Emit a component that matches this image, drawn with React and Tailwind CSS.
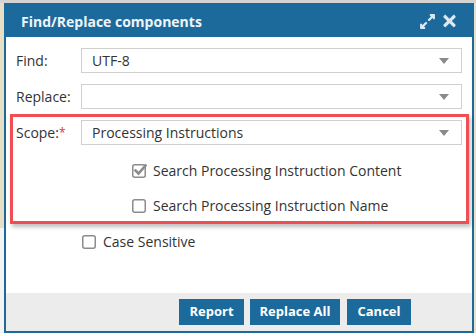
import { FaExpandAlt, FaTimes } from "react-icons/fa";

const font = { fontFamily: '"Open Sans", "Liberation Sans", sans-serif' };

function Caret() {
  return (
    <svg width="10" height="6" viewBox="0 0 10 6" className="shrink-0">
      <path d="M0 0 L10 0 L5 6 Z" fill="#8a8a8a" />
    </svg>
  );
}

function SelectBox({ value }) {
  return (
    <div className="flex-1 h-[25px] border border-[#d0d0d0] bg-white flex items-center pl-[10px] pr-[12px]">
      <span className="flex-1 text-[14px] text-[#333] leading-none">{value}</span>
      <Caret />
    </div>
  );
}

function Box({ checked }) {
  return (
    <svg width="15" height="15" viewBox="0 0 15 15" className="shrink-0">
      <rect x="0.75" y="1.75" width="12.5" height="12.5" rx="2" fill="white" stroke="#8c8c8c" strokeWidth="1.5" />
      {checked && (
        <path d="M3.5 7.5 L6.5 10.5 L13.5 2.5" fill="none" stroke="#8c8c8c" strokeWidth="2.6" strokeLinecap="square" />
      )}
    </svg>
  );
}

function CheckRow({ label, checked, className }) {
  return (
    <div className={"flex items-center h-[20px] " + className}>
      <Box checked={checked} />
      <span className="ml-[6px] text-[14px] text-[#333]">{label}</span>
    </div>
  );
}

export default function App() {
  return (
    <div className="w-[476px] h-[333px] overflow-hidden bg-[#ececec] flex flex-col" style={font}>
      <div className="h-[3px] bg-[#d4d4d4] shrink-0" />
      <div className="flex flex-1">
        {/* page behind the dialog */}
        <div className="w-[4px] flex flex-col">
          <div className="h-[225px] bg-[#e6dfc6]" />
          <div className="flex-1 bg-[#f3f3f3]" />
        </div>

        <div className="w-[470px] h-[330px] border-2 border-[#1b6a9b] flex flex-col relative bg-white">
          {/* header */}
          <div className="h-[32px] bg-[#1b6a9b] flex items-center pl-[15px] pr-[16px]">
            <span className="flex-1 text-[14px] font-bold text-[#eef5fa]">Find/Replace components</span>
            <FaExpandAlt className="text-[#dce9f2] w-[17px] h-[17px]" />
            <FaTimes className="ml-[7px] text-[#dce9f2] w-[13px] h-[18px]" />
          </div>

          {/* body */}
          <div className="flex-1 pt-[11px] pl-[10px] pr-[10px]">
            <div className="flex items-center">
              <span className="w-[65px] text-[14px] text-[#333]">Find:</span>
              <SelectBox value="UTF-8" />
            </div>
            <div className="flex items-center mt-[11px]">
              <span className="w-[65px] text-[14px] text-[#333]">Replace:</span>
              <SelectBox value="" />
            </div>
            <div className="flex items-center mt-[11px]">
              <span className="w-[65px] text-[14px] text-[#333]">
                Scope:<sup className="text-[#d9342b] text-[12px] relative -top-[1px]">*</sup>
              </span>
              <SelectBox value="Processing Instructions" />
            </div>
            <CheckRow className="mt-[15px] ml-[116px]" checked label="Search Processing Instruction Content" />
            <CheckRow className="mt-[15px] ml-[116px]" label="Search Processing Instruction Name" />
            <CheckRow className="mt-[16px] ml-[66px]" label="Case Sensitive" />
          </div>

          {/* footer */}
          <div className="h-[38px] bg-[#ececec] flex items-center justify-end pr-[61px] gap-[6px]">
            <button className="h-[26px] w-[65px] bg-[#1b6a9b] text-white text-[13px] font-bold">Report</button>
            <button className="h-[26px] w-[90px] bg-[#1b6a9b] text-white text-[13px] font-bold">Replace All</button>
            <button className="h-[26px] w-[64px] ml-[1px] bg-[#1b6a9b] text-white text-[13px] font-bold">Cancel</button>
          </div>

          {/* annotation highlight */}
          <div className="absolute left-[4px] top-[109px] w-[459px] h-[110px] border-[3px] border-[#ee4f52] shadow-[2px_3px_4px_rgba(0,0,0,0.25)] pointer-events-none" />
        </div>

        <div className="w-[2px] bg-[#e6e2d2]" />
      </div>
    </div>
  );
}
